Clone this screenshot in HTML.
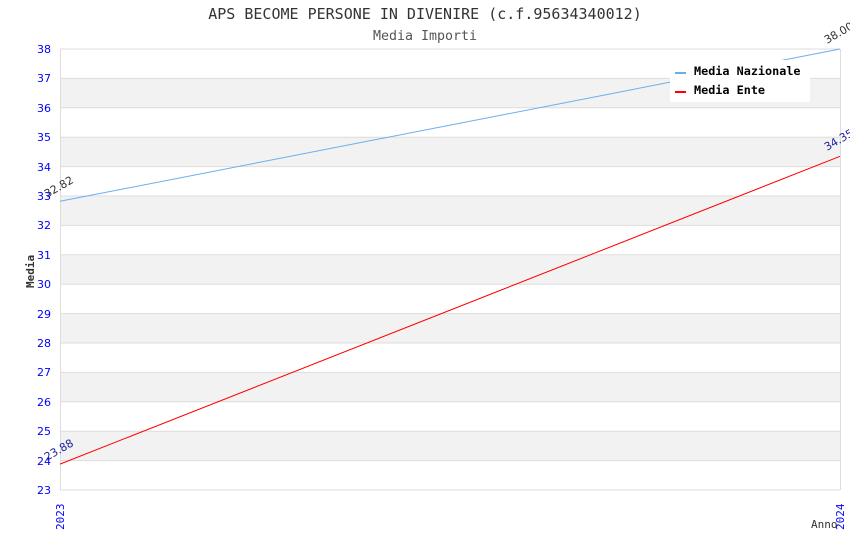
<!DOCTYPE html>
<html><head><meta charset="utf-8"><style>body{margin:0;background:#fff}svg{display:block}</style></head><body>
<svg width="850" height="550" xmlns="http://www.w3.org/2000/svg" font-family="'DejaVu Sans Mono','Liberation Mono',monospace">
<rect width="850" height="550" fill="#fff"/>
<text x="425" y="19" text-anchor="middle" font-size="15" fill="#333">APS BECOME PERSONE IN DIVENIRE (c.f.95634340012)</text>
<text x="425" y="40" text-anchor="middle" font-size="13.3" fill="#555">Media Importi</text>
<g fill="#f2f2f2">
<rect x="60" y="78.4" width="780" height="29.4"/>
<rect x="60" y="137.2" width="780" height="29.4"/>
<rect x="60" y="196" width="780" height="29.4"/>
<rect x="60" y="254.8" width="780" height="29.4"/>
<rect x="60" y="313.6" width="780" height="29.4"/>
<rect x="60" y="372.4" width="780" height="29.4"/>
<rect x="60" y="431.2" width="780" height="29.4"/>
</g>
<g stroke="#ddd" stroke-width="1">
<line x1="60" y1="49" x2="840" y2="49"/><line x1="60" y1="78.4" x2="840" y2="78.4"/><line x1="60" y1="107.8" x2="840" y2="107.8"/><line x1="60" y1="137.2" x2="840" y2="137.2"/><line x1="60" y1="166.6" x2="840" y2="166.6"/><line x1="60" y1="196" x2="840" y2="196"/><line x1="60" y1="225.4" x2="840" y2="225.4"/><line x1="60" y1="254.8" x2="840" y2="254.8"/><line x1="60" y1="284.2" x2="840" y2="284.2"/><line x1="60" y1="313.6" x2="840" y2="313.6"/><line x1="60" y1="343" x2="840" y2="343"/><line x1="60" y1="372.4" x2="840" y2="372.4"/><line x1="60" y1="401.8" x2="840" y2="401.8"/><line x1="60" y1="431.2" x2="840" y2="431.2"/><line x1="60" y1="460.6" x2="840" y2="460.6"/><line x1="60" y1="490" x2="840" y2="490"/>
<line x1="60.5" y1="49" x2="60.5" y2="490"/><line x1="840.5" y1="49" x2="840.5" y2="490"/>
</g>
<g fill="#00f" font-family="'DejaVu Sans','Liberation Sans',sans-serif" font-size="11" text-anchor="end">
<text x="51" y="53">38</text><text x="51" y="82">37</text><text x="51" y="112">36</text><text x="51" y="141">35</text><text x="51" y="171">34</text><text x="51" y="200">33</text><text x="51" y="229">32</text><text x="51" y="259">31</text><text x="51" y="288">30</text><text x="51" y="318">29</text><text x="51" y="347">28</text><text x="51" y="376">27</text><text x="51" y="406">26</text><text x="51" y="435">25</text><text x="51" y="465">24</text><text x="51" y="494">23</text>
</g>
<g fill="#00f" font-size="11">
<text transform="translate(64,530) rotate(-90)">2023</text>
<text transform="translate(844,530) rotate(-90)">2024</text>
</g>
<text transform="translate(34,288) rotate(-90)" font-size="11" fill="#333" font-weight="bold">Media</text>
<text x="811" y="528" font-size="11" fill="#333">Anno</text>
<line x1="60" y1="201.3" x2="840" y2="49" stroke="#6aaef0" stroke-width="1"/>
<line x1="60" y1="464.1" x2="840" y2="156.3" stroke="#f00" stroke-width="1"/>
<g font-family="'DejaVu Sans','Liberation Sans',sans-serif" font-size="11">
<text transform="translate(47,198) rotate(-30)" fill="#333">32.82</text>
<text transform="translate(827,44) rotate(-30)" fill="#333">38.00</text>
<text transform="translate(47,461) rotate(-30)" fill="#229">23.88</text>
<text transform="translate(827,151) rotate(-30)" fill="#229">34.35</text>
</g>
<rect x="670" y="60" width="140" height="42" fill="#fff"/>
<line x1="675" y1="73" x2="686" y2="73" stroke="#6aaef0" stroke-width="2"/>
<line x1="675" y1="92" x2="686" y2="92" stroke="#f00" stroke-width="2"/>
<g font-size="11.8" font-weight="bold" fill="#000">
<text x="694" y="75">Media Nazionale</text>
<text x="694" y="94">Media Ente</text>
</g>
</svg>
</body></html>
